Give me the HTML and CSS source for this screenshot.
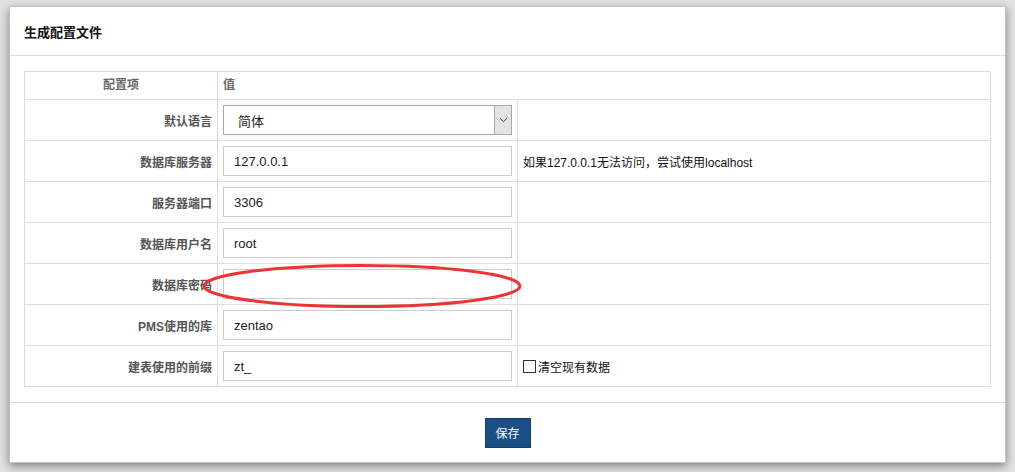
FILE: index.html
```html
<!DOCTYPE html>
<html lang="zh-CN">
<head>
<meta charset="utf-8">
<title>生成配置文件</title>
<link rel="stylesheet" href="styles.css">
</head>
<body>
<div class="panel">
  <div class="panel-heading"><strong>生成配置文件</strong></div>
  <div class="panel-body">
    <table class="config-table">
      <colgroup><col class="col-key"><col class="col-val"><col></colgroup>
      <thead>
        <tr><th class="head-key">配置项</th><th class="head-val" colspan="2">值</th></tr>
      </thead>
      <tbody>
        <tr>
          <th>默认语言</th>
          <td>
            <div class="select"><span class="select-text">简体</span><span class="select-arrow"><svg width="9" height="6" viewBox="0 0 9 6"><path d="M1 1.2 L4.5 4.6 L8 1.2" fill="none" stroke="#444" stroke-width="1"/></svg></span></div>
          </td>
          <td></td>
        </tr>
        <tr>
          <th>数据库服务器</th>
          <td><input class="text-input" type="text" value="127.0.0.1"></td>
          <td class="hint">如果127.0.0.1无法访问，尝试使用localhost</td>
        </tr>
        <tr>
          <th>服务器端口</th>
          <td><input class="text-input" type="text" value="3306"></td>
          <td></td>
        </tr>
        <tr>
          <th>数据库用户名</th>
          <td><input class="text-input" type="text" value="root"></td>
          <td></td>
        </tr>
        <tr>
          <th>数据库密码</th>
          <td><input class="text-input" type="password" value=""></td>
          <td></td>
        </tr>
        <tr>
          <th>PMS使用的库</th>
          <td><input class="text-input" type="text" value="zentao"></td>
          <td></td>
        </tr>
        <tr>
          <th>建表使用的前缀</th>
          <td><input class="text-input" type="text" value="zt_"></td>
          <td class="hint"><label class="check"><span class="check-box"></span>清空现有数据</label></td>
        </tr>
      </tbody>
    </table>
  </div>
  <div class="panel-footer"><button class="btn-save" type="button">保存</button></div>
</div>
<svg class="mark" width="340" height="52" viewBox="0 0 340 52"><ellipse cx="170" cy="26" rx="158" ry="20.5" fill="none" stroke="#ec3434" stroke-width="3"/></svg>
</body>
</html>
```

FILE: styles.css
```css
html, body {
  margin: 0;
  height: 100%;
}

body {
  background: #e2e2e2;
  padding: 6px 9px 0;
  box-sizing: border-box;
  font-family: "Liberation Sans", "Noto Sans CJK SC", sans-serif;
  font-size: 12px;
  color: #333;
  position: relative;
}

.panel {
  width: 997px;
  height: 457px;
  box-sizing: border-box;
  background: #fff;
  border: 1px solid #c6c6c6;
  box-shadow: 0 3px 9px rgba(0, 0, 0, 0.45);
  display: flex;
  flex-direction: column;
}

.panel-heading {
  height: 48px;
  border-bottom: 1px solid #ddd;
  display: flex;
  align-items: center;
  padding: 0 14px;
  font-size: 13px;
  color: #111;
}

.panel-body {
  padding: 15px 14px;
  border-bottom: 1px solid #ddd;
}

.config-table {
  width: 100%;
  border-collapse: collapse;
  table-layout: fixed;
}

.config-table .col-key {
  width: 193px;
}

.config-table .col-val {
  width: 300px;
}

.config-table th,
.config-table td {
  border: 1px solid #ddd;
  padding: 5px;
  height: 30px;
  vertical-align: middle;
}

.config-table thead th {
  height: 15px;
  padding: 6px 5px;
  line-height: 15px;
  color: #666;
  font-weight: bold;
}

.config-table .head-key {
  text-align: center;
}

.config-table .head-val {
  text-align: left;
}

.config-table tbody th {
  text-align: right;
  color: #555;
  font-weight: bold;
}

.text-input {
  display: block;
  width: 100%;
  height: 30px;
  box-sizing: border-box;
  margin: 0;
  padding: 0 10px;
  border: 1px solid #ccc;
  font-family: "Liberation Sans", "Noto Sans CJK SC", sans-serif;
  font-size: 13px;
  color: #222;
  background: #fff;
  outline: none;
}

.select {
  height: 30px;
  box-sizing: border-box;
  border: 1px solid #a9a9a9;
  display: flex;
  align-items: stretch;
  background: #fff;
}

.select-text {
  flex: 1;
  display: flex;
  align-items: center;
  padding-left: 14px;
  font-size: 13px;
  color: #222;
}

.select-arrow {
  width: 16px;
  background: #e3e3e3;
  border-left: 1px solid #a9a9a9;
  display: flex;
  align-items: center;
  justify-content: center;
}

.hint {
  padding-left: 4px;
  color: #111;
}

.check {
  display: flex;
  align-items: center;
  gap: 2px;
}

.check-box {
  width: 11px;
  height: 11px;
  border: 1px solid #333;
  background: #fff;
}

.panel-footer {
  flex: 1;
  display: flex;
  justify-content: center;
  align-items: center;
}

.btn-save {
  width: 46px;
  height: 30px;
  margin: 0;
  padding: 0;
  background: #1b4f85;
  border: 1px solid #153f6a;
  color: #fff;
  font-family: "Liberation Sans", "Noto Sans CJK SC", sans-serif;
  font-size: 12px;
}

/* red annotation ring around the password field */
.mark {
  position: absolute;
  left: 192px;
  top: 260px;
}
```
